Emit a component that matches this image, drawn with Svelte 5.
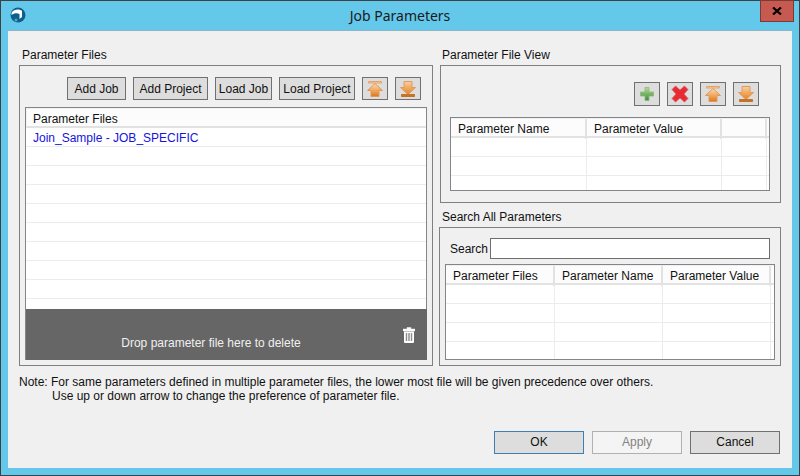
<script>
  const fileRows = Array(9).fill(0);
  const viewCols = ["Parameter Name", "Parameter Value", ""];
  const searchCols = ["Parameter Files", "Parameter Name", "Parameter Value"];
</script>

{#snippet upIcon()}
  <svg width="18" height="18" viewBox="0 0 18 18">
    <defs>
      <linearGradient id="orangeUp" x1="0" y1="0" x2="0" y2="1">
        <stop offset="0" stop-color="#fbd9b6" />
        <stop offset="0.6" stop-color="#f0a055" />
        <stop offset="1" stop-color="#d9761c" />
      </linearGradient>
    </defs>
    <path d="M2.500 1.500h13v1.500h-13z" fill="#f7cda4" stroke="#e6a266" stroke-width="1" />
    <path d="M9 3.500 L16.500 10.500 H13 V16.500 H5 V10.500 H1.500 Z" fill="url(#orangeUp)" stroke="#e09a58" stroke-width="1" />
  </svg>
{/snippet}

{#snippet downIcon()}
  <svg width="18" height="18" viewBox="0 0 18 18">
    <defs>
      <linearGradient id="orangeDown" x1="0" y1="0" x2="0" y2="1">
        <stop offset="0" stop-color="#f9d0a6" />
        <stop offset="0.6" stop-color="#eea052" />
        <stop offset="1" stop-color="#dd8430" />
      </linearGradient>
    </defs>
    <path d="M5 1.500 H13 V7.500 H16.500 L9 14.500 L1.500 7.500 H5 Z" fill="url(#orangeDown)" stroke="#e09a58" stroke-width="1" />
    <path d="M2.500 14.500h13v2h-13z" fill="#c9751f" stroke="#c27226" stroke-width="1" />
  </svg>
{/snippet}

<div class="window">
  <header class="titlebar">
    <svg class="logo" width="16" height="16" viewBox="0 0 16 16">
      <circle cx="8" cy="8" r="7.500" fill="#0f5f8c" />
      <path d="M1.500 6 C4 1.500 10 2 12 4 L12 10 L9.500 12 L9.500 7 C7 5.500 4 6 1.500 8 Z" fill="#fff" />
      <circle cx="6" cy="13" r="1.500" fill="#4aa5c9" />
    </svg>
    <span class="title">Job Parameters</span>
    <button class="close">
      <svg width="10" height="8" viewBox="0 0 10 8"><path d="M1 0.500 L9 7.500 M9 0.500 L1 7.500" stroke="#000" stroke-width="2.200" /></svg>
    </button>
  </header>

  <main class="content">
    <div class="columns">
      <section class="left">
        <div class="legend">Parameter Files</div>
        <div class="group files-group">
          <div class="toolbar">
            <button class="btn w59">Add Job</button>
            <button class="btn w75">Add Project</button>
            <button class="btn w57">Load Job</button>
            <button class="btn w76">Load Project</button>
            <button class="btn icon">{@render upIcon()}</button>
            <button class="btn icon">{@render downIcon()}</button>
          </div>
          <div class="table files">
            <div class="th">Parameter Files</div>
            <div class="rows">
              <div class="row link">Join_Sample - JOB_SPECIFIC</div>
              {#each fileRows as _}
                <div class="row"></div>
              {/each}
            </div>
            <div class="dropzone">
              <span>Drop parameter file here to delete</span>
              <svg class="trash" width="12" height="16" viewBox="0 0 12 16">
                <path d="M0 2h12v2H0zM4 2V0.500h4V2" fill="#fff" stroke="#eee" stroke-width="0.500" />
                <path d="M1 4.500h10V15a1 1 0 0 1-1 1H2a1 1 0 0 1-1-1z" fill="#fff" />
                <path d="M3.500 6v8M6 6v8M8.500 6v8" stroke="#8a8a8a" stroke-width="1.400" />
              </svg>
            </div>
          </div>
        </div>
      </section>

      <section class="right">
        <div class="legend">Parameter File View</div>
        <div class="group view-group">
          <div class="toolbar view-tools">
            <button class="btn icon tall">
              <svg width="16" height="16" viewBox="0 0 16 16">
                <defs>
                  <linearGradient id="plus" x1="0" y1="0" x2="0" y2="1">
                    <stop offset="0" stop-color="#b5dc95" />
                    <stop offset="1" stop-color="#3a8a3a" />
                  </linearGradient>
                </defs>
                <path d="M6 1.500h4V6h4.500v4H10v4.500H6V10H1.500V6H6z" fill="url(#plus)" stroke="#8eb87a" stroke-width="0.800" />
              </svg>
            </button>
            <button class="btn icon tall">
              <svg width="18" height="18" viewBox="0 0 18 18">
                <path d="M4.500 1 L9 5 L13.500 1 L17 4.500 L13 9 L17 13.500 L13.500 17 L9 13 L4.500 17 L1 13.500 L5 9 L1 4.500 Z" fill="#ea2a32" stroke="#d0606a" stroke-width="0.800" />
              </svg>
            </button>
            <button class="btn icon tall">{@render upIcon()}</button>
            <button class="btn icon tall">{@render downIcon()}</button>
          </div>
          <div class="table view">
            <div class="grid-row head view-cols">
              {#each viewCols as c}<div class="cell">{c}</div>{/each}
            </div>
            {#each [0, 1, 2] as _}
              <div class="grid-row view-cols">
                {#each viewCols as c}<div class="cell"></div>{/each}
              </div>
            {/each}
          </div>
        </div>

        <div class="legend second">Search All Parameters</div>
        <div class="group search-group">
          <div class="search">
            <label for="search-input">Search</label>
            <input id="search-input" type="text" />
          </div>
          <div class="table found">
            <div class="grid-row head search-cols">
              {#each searchCols as c}<div class="cell">{c}</div>{/each}
            </div>
            {#each [0, 1, 2, 3] as _}
              <div class="grid-row search-cols">
                {#each searchCols as c}<div class="cell"></div>{/each}
              </div>
            {/each}
          </div>
        </div>
      </section>
    </div>

    <div class="note">
      <p>Note: For same parameters defined in multiple parameter files, the lower most file will be given precedence over others.</p>
      <p class="indent">Use up or down arrow to change the preference of parameter file.</p>
    </div>

    <footer class="actions">
      <button class="btn action default">OK</button>
      <button class="btn action" disabled>Apply</button>
      <button class="btn action">Cancel</button>
    </footer>
  </main>
</div>

<style>
  :global(body) {
    margin: 0;
  }

  * {
    box-sizing: border-box;
  }

  .window {
    width: 800px;
    height: 476px;
    background: #64c8ea;
    border: 1px solid #3c4146;
    padding: 0 7px 7px;
    display: flex;
    flex-direction: column;
    font-family: "Liberation Sans", sans-serif;
    font-size: 12px;
    color: #111;
  }

  .titlebar {
    height: 29px;
    flex: none;
    position: relative;
    display: flex;
    align-items: center;
    justify-content: center;
  }

  .logo {
    position: absolute;
    left: 2px;
    top: 6px;
  }

  .title {
    font-family: "Noto Sans", sans-serif;
    font-size: 14px;
    color: #1a1a1a;
    margin-top: -1px;
  }

  .close {
    position: absolute;
    right: -2px;
    top: -1px;
    width: 34px;
    height: 22px;
    padding: 0;
    background: #c75a50;
    border: 1px solid #7d3a35;
    display: flex;
    align-items: center;
    justify-content: center;
  }

  .content {
    flex: 1;
    background: #f0f0f0;
    border-top: 1px solid #8fb6c8;
    padding: 0 11px;
    display: flex;
    flex-direction: column;
  }

  .columns {
    display: flex;
    gap: 6px;
  }

  .left {
    width: 414px;
  }

  .right {
    width: 342px;
  }

  .legend {
    height: 34px;
    padding-top: 15px;
    line-height: 18px;
    padding-left: 3px;
  }

  .legend.second {
    height: 24px;
    padding-top: 5px;
    padding-left: 3px;
  }

  .group {
    border: 1px solid #808080;
  }

  .files-group {
    height: 301px;
    padding: 11px 5px 5px;
  }

  .view-group {
    margin-left: 1px;
    height: 138px;
    padding: 16px 10px 0 9px;
  }

  .search-group {
    height: 139px;
    padding: 10px 5px 5px;
  }

  .toolbar {
    display: flex;
    justify-content: flex-end;
    gap: 7px;
    height: 30px;
    padding-right: 6px;
  }

  .view-tools {
    height: 35px;
    padding-right: 11px;
  }

  .btn {
    height: 23px;
    padding: 0;
    background: #dddddd;
    border: 1px solid #707070;
    font: inherit;
    color: inherit;
    display: flex;
    align-items: center;
    justify-content: center;
  }

  .w59 {
    width: 59px;
  }

  .w75 {
    width: 75px;
  }

  .w57 {
    width: 57px;
  }

  .w76 {
    width: 76px;
  }

  .btn.icon {
    width: 26px;
  }

  .btn.tall {
    height: 24px;
  }

  .table {
    border: 1px solid #82858c;
    background: #fff;
    overflow: hidden;
  }

  .files {
    height: 253px;
    display: flex;
    flex-direction: column;
    overflow: visible;
  }

  .rows {
    flex: 1;
    min-height: 0;
    overflow: hidden;
  }

  .th,
  .row {
    height: 19px;
    flex: none;
    line-height: 20px;
    padding-left: 7px;
    border-bottom: 1px solid #ececec;
  }

  .th {
    background: #fcfcfc;
    border-bottom: 2px solid #e2e2e2;
    height: 20px;
    padding-left: 6px;
    border-top: 1px solid #f2f2f2;
    border-left: 1px solid #f2f2f2;
  }

  .link {
    color: #1414dc;
  }

  .dropzone {
    flex: none;
    height: 51px;
    margin: 0 -1px -1px 0;
    background: #666;
    color: #f0f0f0;
    position: relative;
    display: flex;
    align-items: flex-end;
    justify-content: center;
    padding: 0 31px 8px 0;
    line-height: 18px;
  }

  .trash {
    position: absolute;
    right: 12px;
    top: 18px;
  }

  .view {
    height: 74px;
  }

  .found {
    height: 96px;
  }

  .grid-row {
    display: grid;
    height: 19px;
    border-bottom: 1px solid #ececec;
  }

  .grid-row.head {
    height: 20px;
    border-top: 1px solid #f0f0f0;
    border-bottom: 2px solid #e2e2e2;
    background: #fcfcfc;
  }

  .view-cols {
    grid-template-columns: 136px 135px 45px;
  }

  .search-cols {
    grid-template-columns: 109px 108px 108px;
  }

  .cell {
    padding-left: 7px;
    line-height: 20px;
    border-right: 1px solid #ececec;
    white-space: nowrap;
  }

  .head .cell {
    border-right: 2px solid #e2e2e2;
  }

  .search {
    display: flex;
    align-items: center;
    height: 26px;
    padding: 0 5px 5px 5px;
  }

  .search label {
    width: 40px;
  }

  .search input {
    width: 280px;
    height: 21px;
    border: 1px solid #6e6e6e;
    background: #fff;
    padding: 0 4px;
  }

  .note {
    margin-top: 9px;
    line-height: 14px;
  }

  .note p {
    margin: 0;
  }

  .note .indent {
    padding-left: 33px;
  }

  .actions {
    margin-top: 28px;
    margin-right: 1px;
    display: flex;
    justify-content: flex-end;
    gap: 8px;
  }

  .action {
    width: 90px;
    padding-bottom: 1px;
  }

  .default {
    border-color: #3c7fb1;
  }

  .action:disabled {
    background: #f4f4f4;
    border-color: #adb2b5;
    color: #838383;
  }
</style>
